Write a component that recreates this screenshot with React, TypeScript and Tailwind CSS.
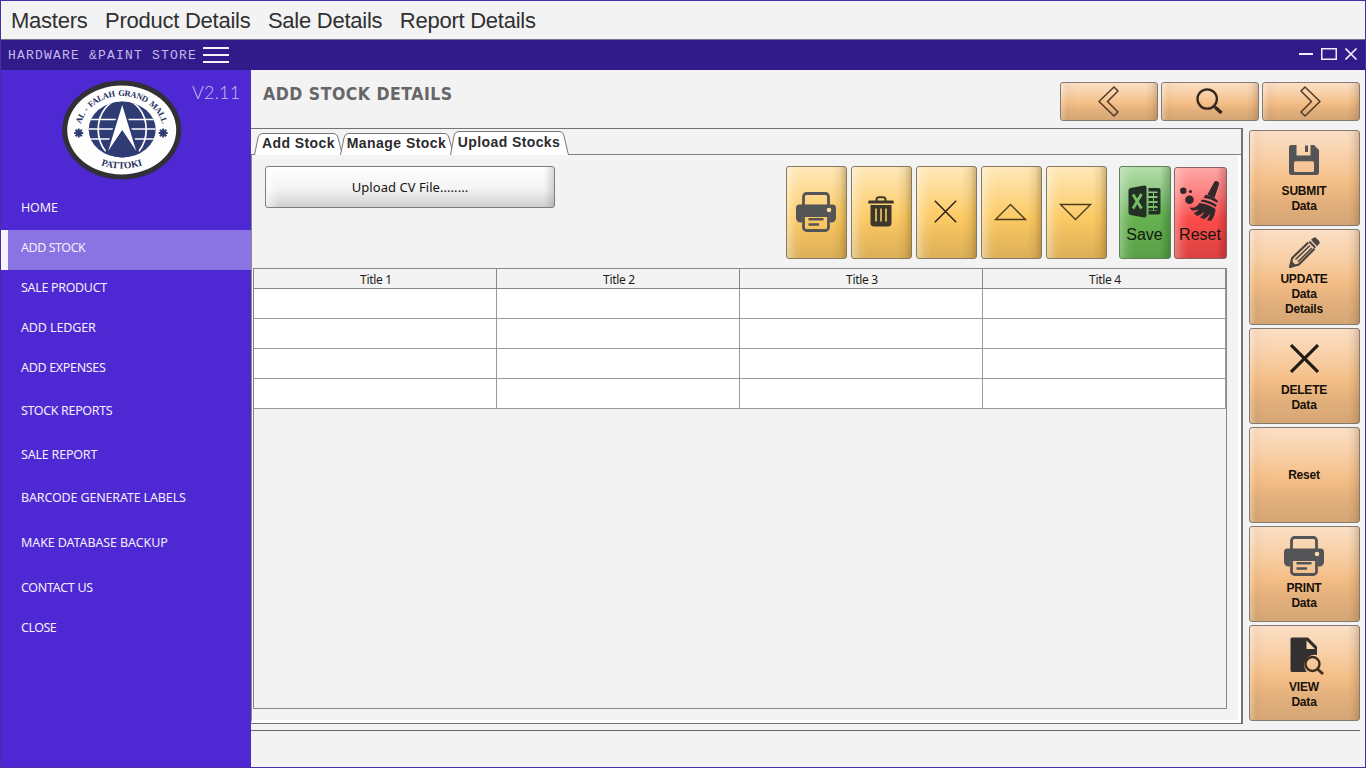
import React from "react";

const PEACH =
  "border border-[#857a70] rounded-[3px] bg-[linear-gradient(90deg,rgba(255,255,255,0.25)_0px,rgba(110,75,40,0.04)_6px,rgba(255,255,255,0)_16px),linear-gradient(270deg,rgba(110,75,40,0.25)_0px,rgba(110,75,40,0.08)_6px,rgba(110,75,40,0)_12px),linear-gradient(180deg,#fbdfc5_0%,#f8cfa6_30%,#f4be86_55%,#e3b07c_75%,#d5a675_100%)]";
const YELLOW =
  "border border-[#857a60] rounded-[3px] bg-[linear-gradient(90deg,rgba(255,255,255,0.4)_0px,rgba(255,255,255,0.1)_8px,rgba(255,255,255,0)_15px),linear-gradient(270deg,rgba(110,80,10,0.35)_0px,rgba(110,80,10,0.1)_6px,rgba(110,80,10,0)_14px),linear-gradient(180deg,#ffe8b8_0%,#fdd88c_30%,#fdcb66_55%,#eaba5c_80%,#dcb05a_100%)]";
const GREEN =
  "border border-[#5f7f55] rounded-[3px] bg-[linear-gradient(90deg,rgba(255,255,255,0.3)_0px,rgba(255,255,255,0.08)_8px,rgba(255,255,255,0)_14px),linear-gradient(270deg,rgba(0,50,0,0.25)_0px,rgba(0,50,0,0)_10px),linear-gradient(180deg,#b4dcaa_0%,#8cc67f_30%,#66b251_55%,#5aa048_100%)]";
const RED =
  "border border-[#8a6060] rounded-[3px] bg-[linear-gradient(90deg,rgba(255,255,255,0.3)_0px,rgba(255,255,255,0.08)_8px,rgba(255,255,255,0)_14px),linear-gradient(270deg,rgba(90,0,0,0.25)_0px,rgba(90,0,0,0)_10px),linear-gradient(180deg,#ffa6a6_0%,#fc7d7d_30%,#fb4a4a_58%,#dc4242_100%)]";

const MENU = ["Masters", "Product Details", "Sale Details", "Report Details"];

const NAV: { label: string; gap: string; active?: boolean }[] = [
  { label: "HOME", gap: "mt-0 tracking-[-0.15px]" },
  { label: "ADD STOCK", gap: "mt-0 tracking-[-0.45px]", active: true },
  { label: "SALE PRODUCT", gap: "mt-0 tracking-[-0.33px]" },
  { label: "ADD LEDGER", gap: "mt-0 tracking-[-0.12px]" },
  { label: "ADD EXPENSES", gap: "mt-0 tracking-[-0.33px]" },
  { label: "STOCK REPORTS", gap: "mt-[3px] tracking-[-0.35px]" },
  { label: "SALE REPORT", gap: "mt-[4px] tracking-[-0.2px]" },
  { label: "BARCODE GENERATE LABELS", gap: "mt-[3px] tracking-[-0.15px]" },
  { label: "MAKE DATABASE BACKUP", gap: "mt-[5px] tracking-[-0.1px]" },
  { label: "CONTACT US", gap: "mt-[5px] tracking-[-0.3px]" },
  { label: "CLOSE", gap: "mt-0 tracking-[-0.5px]" },
];

function Logo() {
  return (
    <svg width="120" height="100" viewBox="0.3 0 120 100">
      <defs>
        <path id="arcTop" d="M 18.300 52 A 41.700 36 0 0 1 101.700 52" />
        <path id="arcBottom" d="M 16 60 A 44 28.500 0 0 0 104 60" />
        <clipPath id="globe">
          <ellipse cx="60.500" cy="49.500" rx="33.500" ry="28" />
        </clipPath>
      </defs>
      <ellipse cx="60" cy="50" rx="59.500" ry="49.500" fill="#303036" />
      <ellipse cx="60" cy="50" rx="54.500" ry="44.500" fill="#fefefe" />
      <ellipse cx="60.500" cy="49.500" rx="33.500" ry="28" fill="#2f3b73" />
      <g clipPath="url(#globe)" stroke="#fefefe" fill="none" strokeWidth="1.700">
        <path d="M27 39.500h67M27 49h67M27 59h67" />
        <ellipse cx="60.500" cy="49.500" rx="24" ry="30" />
      </g>
      <path d="M60.500 20 L80 80 H41 Z" fill="#2f3b73" clipPath="url(#globe)" />
      <path d="M60.500 25 L74.500 71 L60.500 50 L46.500 71 Z" fill="#fefefe" />
      <g fill="none" stroke="#2f3b73" strokeWidth="2">
        <path d="M17 48.500v9M12.500 53h9M13.800 49.800l6.400 6.400M20.200 49.800l-6.400 6.400" />
        <path d="M101.500 48.500v9M97 53h9M98.300 49.800l6.400 6.400M104.700 49.800l-6.400 6.400" />
      </g>
      <g fill="#26305f" className="font-['Liberation_Serif',serif] font-bold">
        <text className="text-[8.5px]" wordSpacing="1.500">
          <textPath href="#arcTop" startOffset="8" textLength="106">AL - FALAH GRAND MALL</textPath>
        </text>
        <text className="text-[9.5px]" textAnchor="middle">
          <textPath href="#arcBottom" startOffset="50%">PATTOKI</textPath>
        </text>
      </g>
    </svg>
  );
}

function PrinterIcon() {
  return (
    <svg width="40" height="40" viewBox="0 0 40 40" fill="none">
      <path d="M3.500 12.500h33a3.500 3.500 0 0 1 3.500 3.500v10a4.500 4.500 0 0 1-4.500 4.500H34V22H6v8.500H4.500A4.500 4.500 0 0 1 0 26V16a3.500 3.500 0 0 1 3.500-3.500z" fill="#545456" />
      <path d="M7.500 13V4.500a3 3 0 0 1 3-3h19a3 3 0 0 1 3 3V13" stroke="#545456" strokeWidth="2.800" />
      <path d="M7.500 23.500v12a3 3 0 0 0 3 3h19a3 3 0 0 0 3-3v-12z" stroke="#545456" strokeWidth="2.800" />
      <path d="M12.500 27.300h15M12.500 32.500h10.500" stroke="#545456" strokeWidth="2.600" />
      <circle cx="33" cy="18" r="2.300" fill="#fdd9a0" />
    </svg>
  );
}

function TrashIcon() {
  return (
    <svg width="26" height="31" viewBox="0 0 26 31" fill="none">
      <path d="M8.500 5V3.500A2.500 2.500 0 0 1 11 1.200h4a2.500 2.500 0 0 1 2.500 2.300V5" stroke="#3c3829" strokeWidth="2" />
      <path d="M1.500 4.500h23a1.300 1.300 0 0 1 1.300 1.300V7.500H.2V5.800a1.300 1.300 0 0 1 1.300-1.300z" fill="#3c3829" />
      <path d="M2.500 9h21v18a3.500 3.500 0 0 1-3.500 3.500H6A3.500 3.500 0 0 1 2.500 27z" fill="#3c3829" />
      <path d="M8 12.500v13M13 12.500v13M18 12.500v13" stroke="#e8be68" strokeWidth="1.700" />
    </svg>
  );
}

function FloppyIcon() {
  return (
    <svg width="30" height="30" viewBox="0 0 30 30">
      <path d="M2.500 0H7.500v10.500h14V0h3.500L30 5v22.500a2.500 2.500 0 0 1-2.500 2.500h-25A2.500 2.500 0 0 1 0 27.500v-25A2.500 2.500 0 0 1 2.500 0z" fill="#545456" />
      <path d="M16 .5h3v6.500h-3z" fill="#545456" />
      <rect x="5" y="16.300" width="20" height="10.700" rx="1.500" fill="#f6c697" />
    </svg>
  );
}

function PencilIcon() {
  return (
    <svg width="31" height="31" viewBox="0 0 31 31" fill="none">
      <path d="M22 2.800 24.500.8a2 2 0 0 1 2.600.1l3 3.200a2 2 0 0 1 .1 2.600L28 9.300z" fill="#4b4540" />
      <path d="M20.300 4.500 26.300 10.800" stroke="#4b4540" strokeWidth="2" />
      <path d="M19.300 5.500 3.200 21 1.200 29.800 9.800 27.500 25.500 11.800" stroke="#4b4540" strokeWidth="2.200" />
      <path d="M21 8.500 6.500 22.500M23 11 9 24.800" stroke="#4b4540" strokeWidth="1.600" />
      <path d="M1 30l1.500-5 3.500 3.500z" stroke="#4b4540" strokeWidth="1.500" fill="#4b4540" />
    </svg>
  );
}

function CrossIcon({ size, stroke }: { size: number; stroke: number }) {
  return (
    <svg width={size} height={size} viewBox="0 0 28 28">
      <path d="M1 1 27 27M27 1 1 27" stroke="#231a12" strokeWidth={stroke} fill="none" />
    </svg>
  );
}

function DocSearchIcon() {
  return (
    <svg width="34" height="38" viewBox="0 0 34 38" fill="none">
      <path d="M2 .5h16L27 9.500V18a10.500 10.500 0 0 0-11.500 15q.5 1 1.300 2H2a1.500 1.500 0 0 1-1.500-1.500V2A1.500 1.500 0 0 1 2 .5z" fill="#333032" />
      <path d="M16.500 3.500v8.500h8.500z" fill="#fbd6b0" />
      <circle cx="22.500" cy="27" r="7" stroke="#3e2f22" strokeWidth="2.400" />
      <path d="m27.500 32 5.500 5" stroke="#3e2f22" strokeWidth="2.800" />
    </svg>
  );
}

function ExcelIcon() {
  return (
    <svg width="33" height="33" viewBox="0 0 33 33">
      <path d="M2.500 3 16 .5q2.500-.3 2.500 2v28q0 2.300-2.500 2L2.500 30Q.5 29.500.5 27.500v-22Q.5 3.500 2.500 3z" fill="#233125" />
      <path d="M20.500 3H30.500q2 0 2 2v22.500q0 2-2 2h-10v-3.500h9V6.500h-9z" fill="#233125" />
      <path d="M20.500 8h4.500v3h-4.500zM20.500 13h4.500v3h-4.500zM20.500 18h4.500v3h-4.500zM20.500 23h4.500v2.500h-4.500zM26 8h4.500v3h-4.500zM26 13h4.500v3h-4.500zM26 18h4.500v3h-4.500zM26 23h4.500v2.500h-4.500z" fill="#233125" />
      <path d="M5 9.500 13.500 23.500M13.500 9 5 23.500" stroke="#76bd64" strokeWidth="2.800" fill="none" />
    </svg>
  );
}

function BroomIcon() {
  return (
    <svg width="42" height="42" viewBox="0 0 42 42" fill="none">
      <circle cx="4.300" cy="10.800" r="3.200" fill="#32282b" />
      <circle cx="11.500" cy="11.500" r="1.600" fill="#32282b" />
      <circle cx="10.500" cy="19.800" r="4.300" fill="#32282b" />
      <path d="M35 2.500q1-2 3.200-1.300 2.300.8 1.800 3L35.500 18 28.500 14.500z" fill="#32282b" />
      <path d="M26.500 14.800q7 1 12.500 6.200l-.8 1.800Q32 18.500 24.500 18z" fill="#32282b" />
      <path d="M23 19.500q8.500 1 14.700 5.500l-.9 2.200Q29.500 22.500 21.500 21.500z" fill="#32282b" />
      <path d="M20.500 23Q29.500 24 36.500 29q0 6-4.500 12l-4-.8q2.500-3 3-6.500-3 4-6 5.500l-4-2q3-2 4.500-5.500-4 3.500-7.500 4.200l-3.500-3q3.500-1 5.500-3.700-3.500 1.800-7 1.300l-2.500-3Q17 29 20.500 23z" fill="#32282b" />
    </svg>
  );
}

function Chevron({ flip }: { flip?: boolean }) {
  return (
    <svg width="21" height="31" viewBox="0 0 21 31" fill="none" className={flip ? "-scale-x-100" : ""}>
      <path d="M16 1 1 15.500 16 30 20 26 9.500 15.500 20 5z" stroke="#4f3a28" strokeWidth="1.500" strokeLinejoin="round" />
    </svg>
  );
}

function Magnifier() {
  return (
    <svg width="27" height="27" viewBox="0 0 27 27" fill="none">
      <circle cx="11.200" cy="11" r="9.700" stroke="#33271e" strokeWidth="2.300" />
      <path d="m18 18 2.500 2.500" stroke="#33271e" strokeWidth="2.200" />
      <path d="m19.500 19.500 6 5.500" stroke="#33271e" strokeWidth="3.600" />
    </svg>
  );
}

function Triangle({ down }: { down?: boolean }) {
  return (
    <svg width="33" height="18" viewBox="0 0 33 18" fill="none" className={down ? "-scale-y-100" : ""}>
      <path d="M1.500 16.500 16.500 1.500 31.500 16.500z" stroke="#4b3c1e" strokeWidth="1.400" />
    </svg>
  );
}

function Tab({ label, w, active, cls }: { label: string; w: number; active?: boolean; cls: string }) {
  const h = active ? 24 : 22;
  return (
    <div className={"relative flex justify-center " + cls}>
      <svg width={w} height={h} viewBox={`0 0 ${w} ${h}`} className="absolute inset-0">
        <path
          d={`M.5 ${h} 4 5Q5 .5 9 .5H${w - 10}Q${w - 6} .5 ${w - 5} 5L${w - 0.5} ${h}`}
          fill="#ffffff"
          stroke="#77777b"
        />
      </svg>
      <span className="relative whitespace-nowrap">{label}</span>
    </div>
  );
}

function SideButton({ lines, icon, pt }: { lines: string[]; icon?: React.ReactNode; pt: string }) {
  return (
    <button className={"flex h-[96px] w-[111px] flex-col items-center pr-px text-[12px] leading-[15px] font-bold tracking-[-0.2px] text-[#17100a] " + PEACH + " " + pt}>
      {icon}
      {lines.map((l, i) => (
        <span key={i}>{l}</span>
      ))}
    </button>
  );
}

const TOOL = "flex h-[93px] w-[61px] items-center justify-center pr-[2px] pb-[2px] ";
const PAGER = "flex h-[39px] w-[98px] items-center justify-center pr-[2px] ";

export default function App() {
  return (
    <div className="flex h-[768px] w-[1366px] flex-col overflow-hidden border border-[#4a2ca8] bg-[#f3f3f3] font-['Liberation_Sans',Arial,sans-serif]">
      <nav className="flex h-[39px] shrink-0 items-center gap-[17.500px] border-b border-[#77728c] pl-[10px] text-[22px] tracking-[-0.25px] text-[#303032]">
        {MENU.map((m) => (
          <span key={m} className="whitespace-nowrap">{m}</span>
        ))}
      </nav>

      <header className="flex h-[30px] shrink-0 items-center bg-[#311b8b] pl-[7px]">
        <span className="w-[195px] pt-px font-['Liberation_Mono','Courier_New',monospace] text-[13px] tracking-[1.2px] whitespace-nowrap text-[#c4b9ee]">
          HARDWARE &amp;PAINT STORE
        </span>
        <svg width="26" height="18" viewBox="0 0 26 18" className="shrink-0">
          <path d="M0 2h26M0 9h26M0 16h26" stroke="#f4f2fb" strokeWidth="2" />
        </svg>
        <div className="ml-auto flex items-center gap-[8px] pr-[7px] pb-[2px]">
          <svg width="14" height="14" viewBox="0 0 14 14"><path d="M0 7h14" stroke="#f0edfa" strokeWidth="2" /></svg>
          <svg width="16" height="12" viewBox="0 0 16 12"><rect x=".75" y=".75" width="14.500" height="10.500" fill="none" stroke="#f0edfa" strokeWidth="1.500" /></svg>
          <svg width="13" height="12" viewBox="0 0 13 12"><path d="M.5.5l11 11M11.500.5l-11 11" stroke="#f0edfa" strokeWidth="1.600" /></svg>
        </div>
      </header>

      <div className="flex min-h-0 flex-1">
        <aside className="flex w-[250px] shrink-0 flex-col bg-[#4e28d2]">
          <div className="flex h-[120px] items-start pt-[10px] pl-[61px]">
            <Logo />
            <span className="ml-[10px] font-['Lato',sans-serif] text-[18px] leading-[24px] font-light tracking-[0.2px] text-[#cabdf2]">V2.11</span>
          </div>
          {NAV.map((n) => (
            <div
              key={n.label}
              className={
                "flex h-[40px] shrink-0 items-center pb-[4px] font-['Noto_Sans',sans-serif] text-[12.500px] whitespace-nowrap text-[#f3effc] " +
                (n.active ? "border-l-[7px] border-[#f5f3fb] bg-[#8a73e2] pl-[13px] " : "pl-[20px] ") +
                n.gap
              }
            >
              {n.label}
            </div>
          ))}
        </aside>

        <main className="flex min-w-0 flex-1 flex-col">
          <div className="flex h-[58px] shrink-0 items-start justify-between pt-[12px] pr-[5px] pl-[12px]">
            <h1 className="font-['DejaVu_Sans_Condensed','DejaVu_Sans',sans-serif] text-[17.500px] leading-[24px] font-bold tracking-[0.5px] text-[#666668]">ADD STOCK DETAILS</h1>
            <div className="flex gap-[3px]">
              <button className={PAGER + PEACH}><Chevron /></button>
              <button className={PAGER + PEACH}><Magnifier /></button>
              <button className={PAGER + PEACH}><Chevron flip /></button>
            </div>
          </div>

          <div className="flex h-[596px] shrink-0">
            <section className="flex w-[992px] shrink-0 flex-col border-t border-r-2 border-b border-[#737375] bg-[#f3f3f3]">
              <div className="flex h-[26px] shrink-0 items-end border-b border-[#808084] pl-[3px] text-[14px] leading-[20px] font-bold text-[#2b2b2e]">
                <Tab label="Add Stock" w={89} cls="w-[89px] h-[21px] tracking-[0.4px]" />
                <Tab label="Manage Stock" w={114} cls="-ml-[3px] w-[114px] h-[21px] pr-[1px] tracking-[0.45px]" />
                <Tab label="Upload Stocks" w={119} active cls="-ml-[4px] -mb-px w-[119px] h-[24px] pt-px pr-[1px] tracking-[0.4px]" />
              </div>
              <div className="flex flex-1 flex-col border-r-[3px] border-b-[3px] border-l border-r-white border-b-white border-l-[#8a8a8e] pl-px">
                <div className="flex h-[113px] shrink-0 items-start pt-[11px] pl-[12px]">
                  <button className="h-[42px] w-[290px] rounded-[3px] border border-[#7d7d7f] bg-[linear-gradient(90deg,rgba(255,255,255,0.6)_0px,rgba(255,255,255,0)_14px),linear-gradient(270deg,rgba(80,80,80,0.22)_0px,rgba(80,80,80,0)_10px),linear-gradient(180deg,#ffffff_0%,#f3f3f3_55%,#dcdcdc_85%,#cfcfcf_100%)] pt-[2px] font-['Noto_Sans',sans-serif] text-[13px] tracking-[0.05px] text-[#141414]">
                    Upload CV File........
                  </button>
                  <div className="ml-[231px] flex gap-[4px]">
                    <button className={TOOL + YELLOW}><PrinterIcon /></button>
                    <button className={TOOL + YELLOW}><TrashIcon /></button>
                    <button className={TOOL + YELLOW}><CrossIcon size={23} stroke={1.7} /></button>
                    <button className={TOOL + YELLOW}><Triangle /></button>
                    <button className={TOOL + YELLOW}><Triangle down /></button>
                  </div>
                  <div className="ml-[12px] flex items-end gap-[3px] text-[16px] text-[#15150f]">
                    <button className={"flex h-[93px] w-[52px] flex-col items-center pt-[18px] pr-px " + GREEN}>
                      <ExcelIcon />
                      <span className="mt-[7px] leading-[20px]">Save</span>
                    </button>
                    <button className={"flex h-[92px] w-[53px] flex-col items-center pt-[12px] pr-px " + RED}>
                      <BroomIcon />
                      <span className="mt-[3px] leading-[20px]">Reset</span>
                    </button>
                  </div>
                </div>
                <div className="h-[441px] w-[974px] border border-[#88888b]">
                  <table className="w-[972px] table-fixed border-separate border-spacing-0">
                    <thead>
                      <tr>
                        {[1, 2, 3, 4].map((n) => (
                          <th key={n} className="h-[20px] border-r border-b border-[#88888b] p-0 pt-px pl-[2px] font-['Noto_Sans',sans-serif] text-[12px] leading-[18px] font-normal tracking-[-0.3px] text-[#1c1c20]">
                            <div className="relative top-px">Title {n}</div>
                          </th>
                        ))}
                      </tr>
                    </thead>
                    <tbody>
                      {[1, 2, 3, 4].map((r) => (
                        <tr key={r}>
                          {[1, 2, 3, 4].map((c) => (
                            <td key={c} className="h-[30px] border-r border-b border-[#9a9a9c] bg-white p-0" />
                          ))}
                        </tr>
                      ))}
                    </tbody>
                  </table>
                </div>
              </div>
            </section>

            <div className="flex flex-col gap-[3px] pt-[2px] pl-[6px]">
              <SideButton lines={["SUBMIT", "Data"]} pt="pt-[14px]" icon={<span className="mb-[9px]"><FloppyIcon /></span>} />
              <SideButton lines={["UPDATE", "Data", "Details"]} pt="pt-[7px]" icon={<span className="mb-[4px]"><PencilIcon /></span>} />
              <SideButton lines={["DELETE", "Data"]} pt="pt-[15px]" icon={<span className="mb-[10px]"><CrossIcon size={29} stroke={3} /></span>} />
              <SideButton lines={["Reset"]} pt="pt-[40px]" />
              <SideButton lines={["PRINT", "Data"]} pt="pt-[9px]" icon={<span className="mb-[5px]"><PrinterIcon /></span>} />
              <SideButton lines={["VIEW", "Data"]} pt="pt-[11px]" icon={<span className="mb-[5px] ml-[5px]"><DocSearchIcon /></span>} />
            </div>
          </div>
          <footer className="mt-[6px] mr-[5px] flex-1 border-t border-[#6a6a6e]" />
        </main>
      </div>
    </div>
  );
}
